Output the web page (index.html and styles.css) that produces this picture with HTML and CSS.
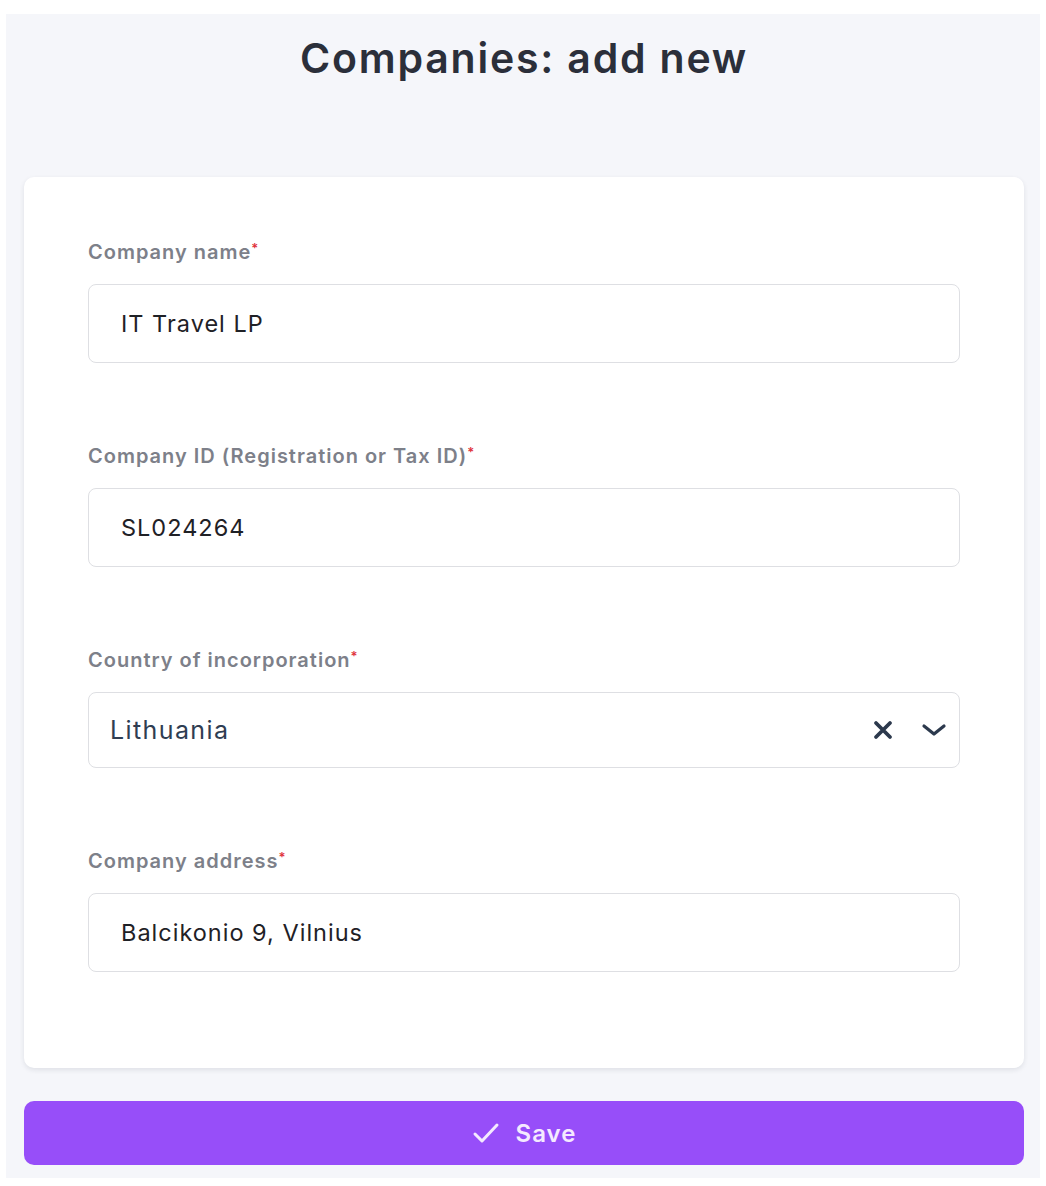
FILE: index.html
```html
<!DOCTYPE html>
<html lang="en">
<head>
<meta charset="utf-8">
<title>Companies: add new</title>
<link rel="stylesheet" href="styles.css">
</head>
<body>
<div class="page">
  <header class="header">
    <h1 class="title">Companies: add new</h1>
  </header>
  <form class="card">
    <div class="field">
      <label class="label">Company name<span class="req">*</span></label>
      <div class="input">IT Travel LP</div>
    </div>
    <div class="field">
      <label class="label">Company ID (Registration or Tax ID)<span class="req">*</span></label>
      <div class="input">SL024264</div>
    </div>
    <div class="field">
      <label class="label">Country of incorporation<span class="req">*</span></label>
      <div class="select">
        <span class="select-value">Lithuania</span>
        <span class="select-icons">
          <svg class="ico-x" width="20" height="20" viewBox="0 0 20 20"><path d="M3 3 L17 17 M17 3 L3 17" stroke="#2c394d" stroke-width="3.8" stroke-linecap="round" fill="none"/></svg>
          <svg class="ico-chev" width="26" height="16" viewBox="0 0 26 16"><path d="M3 4 L13 12 L23 4" stroke="#2c394d" stroke-width="3.2" stroke-linecap="round" stroke-linejoin="round" fill="none"/></svg>
        </span>
      </div>
    </div>
    <div class="field">
      <label class="label">Company address<span class="req">*</span></label>
      <div class="input">Balcikonio 9, Vilnius</div>
    </div>
  </form>
  <button class="save" type="button">
    <svg width="28" height="22" viewBox="0 0 28 22"><path d="M3 12 L10 19 L25 3" stroke="#f4eaff" stroke-width="3" stroke-linecap="round" stroke-linejoin="round" fill="none"/></svg>
    <span>Save</span>
  </button>
</div>
</body>
</html>
```
FILE: styles.css
```css
html, body {
  margin: 0;
  padding: 0;
  background: #ffffff;
}
body {
  font-family: "Inter", "Open Sans", "Liberation Sans", sans-serif;
}
.page {
  margin: 14px 6px 9px 6px;
  background: #f5f6fa;
  padding: 0 16px 13px 18px;
}
.header {
  height: 163px;
  display: flex;
  justify-content: center;
  align-items: flex-start;
}
.title {
  margin: 0;
  padding-top: 20px;
  font-size: 41px;
  line-height: 48px;
  font-weight: 600;
  letter-spacing: 1.8px;
  color: #2b2f3a;
}
.card {
  background: #ffffff;
  border-radius: 10px;
  box-shadow: 0 2px 5px rgba(30, 35, 60, 0.10);
  padding: 63px 64px 96px 64px;
  display: flex;
  flex-direction: column;
  gap: 81px;
}
.field {
  display: flex;
  flex-direction: column;
  gap: 20px;
}
.label {
  display: block;
  font-size: 20px;
  line-height: 24px;
  font-weight: 600;
  letter-spacing: 1px;
  color: #7d8089;
}
.req {
  color: #e0323c;
  font-size: 13px;
  line-height: 0;
  vertical-align: 6px;
  letter-spacing: 0;
}
.input {
  box-sizing: border-box;
  height: 79px;
  border: 1.5px solid #dedfe3;
  border-radius: 8px;
  padding: 0 32px;
  display: flex;
  align-items: center;
  font-size: 23.5px;
  letter-spacing: 1px;
  color: #1f2126;
}
.select {
  height: 76px;
  box-sizing: border-box;
  border: 1.5px solid #dedfe3;
  border-radius: 8px;
  padding: 0 12px 0 21px;
  display: flex;
  align-items: center;
  justify-content: space-between;
}
.select-value {
  font-size: 25px;
  letter-spacing: 1.4px;
  color: #2f3d52;
}
.select-icons {
  display: flex;
  align-items: center;
  gap: 28px;
}
.save {
  margin-top: 33px;
  width: 100%;
  height: 64px;
  border: none;
  border-radius: 10px;
  background: #974ef9;
  color: #f4eaff;
  display: flex;
  align-items: center;
  justify-content: center;
  gap: 16px;
  font-family: "Inter", "Open Sans", "Liberation Sans", sans-serif;
  font-size: 24px;
  font-weight: 600;
  letter-spacing: 1px;
}
```
